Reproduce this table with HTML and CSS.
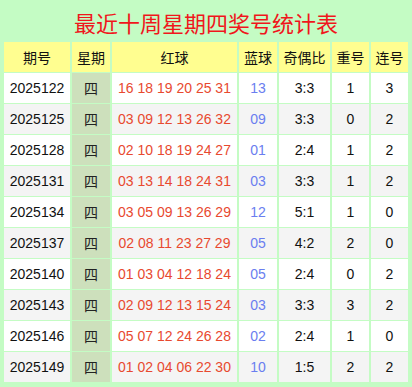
FILE: index.html
```html
<!DOCTYPE html>
<html lang="zh">
<head>
<meta charset="utf-8">
<link rel="stylesheet" href="styles.css">
</head>
<body>
<div class="panel">
  <div class="title">最近十周星期四奖号统计表</div>
  <table class="stats">
    <colgroup>
      <col class="c1"><col class="c2"><col class="c3"><col class="c4"><col class="c5"><col class="c6"><col class="c7">
    </colgroup>
    <thead>
      <tr><th>期号</th><th>星期</th><th>红球</th><th>蓝球</th><th>奇偶比</th><th>重号</th><th>连号</th></tr>
    </thead>
    <tbody>
      <tr><td>2025122</td><td class="wk">四</td><td class="red">16 18 19 20 25 31</td><td class="blue">13</td><td>3:3</td><td>1</td><td>3</td></tr>
      <tr><td>2025125</td><td class="wk">四</td><td class="red">03 09 12 13 26 32</td><td class="blue">09</td><td>3:3</td><td>0</td><td>2</td></tr>
      <tr><td>2025128</td><td class="wk">四</td><td class="red">02 10 18 19 24 27</td><td class="blue">01</td><td>2:4</td><td>1</td><td>2</td></tr>
      <tr><td>2025131</td><td class="wk">四</td><td class="red">03 13 14 18 24 31</td><td class="blue">03</td><td>3:3</td><td>1</td><td>2</td></tr>
      <tr><td>2025134</td><td class="wk">四</td><td class="red">03 05 09 13 26 29</td><td class="blue">12</td><td>5:1</td><td>1</td><td>0</td></tr>
      <tr><td>2025137</td><td class="wk">四</td><td class="red">02 08 11 23 27 29</td><td class="blue">05</td><td>4:2</td><td>2</td><td>0</td></tr>
      <tr><td>2025140</td><td class="wk">四</td><td class="red">01 03 04 12 18 24</td><td class="blue">05</td><td>2:4</td><td>0</td><td>2</td></tr>
      <tr><td>2025143</td><td class="wk">四</td><td class="red">02 09 12 13 15 24</td><td class="blue">03</td><td>3:3</td><td>3</td><td>2</td></tr>
      <tr><td>2025146</td><td class="wk">四</td><td class="red">05 07 12 24 26 28</td><td class="blue">02</td><td>2:4</td><td>1</td><td>0</td></tr>
      <tr><td>2025149</td><td class="wk">四</td><td class="red">01 02 04 06 22 30</td><td class="blue">10</td><td>1:5</td><td>2</td><td>2</td></tr>
    </tbody>
  </table>
</div>
</body>
</html>
```

FILE: styles.css
```css
html, body {
  margin: 0;
  padding: 0;
  background: #c4fcc4;
}
.panel {
  width: 412px;
  height: 387px;
  background: #c4fcc4;
  font-family: "Liberation Sans", "Noto Sans CJK SC", sans-serif;
  overflow: hidden;
}
.title {
  height: 42px;
  line-height: 44px;
  text-align: center;
  color: #f0161c;
  font-size: 22px;
  font-family: "Noto Sans CJK SC", sans-serif;
}
.stats {
  border-collapse: separate;
  border-spacing: 2px 1px;
  table-layout: fixed;
  width: 408px;
  margin: -1px 0 0 2px;
  font-size: 14px;
  color: #111;
}
.c1 { width: 66px; }
.c2 { width: 38px; }
.c3 { width: 125px; }
.c4 { width: 38px; }
.c5 { width: 51px; }
.c6 { width: 37px; }
.c7 { width: 37px; }
.stats th, .stats td {
  padding: 0;
  text-align: center;
  white-space: nowrap;
}
.stats th {
  height: 30px;
  background: #fffe90;
  font-weight: normal;
  font-family: "Noto Sans CJK SC", sans-serif;
  font-size: 14px;
  color: #111;
}
.stats td {
  height: 30px;
  background: #ffffff;
}
.stats tbody tr:nth-child(even) td {
  background: #f4f4f4;
}
.stats td.wk, .stats tbody tr:nth-child(even) td.wk {
  background: #cde0bc;
  font-family: "Noto Sans CJK SC", sans-serif;
  color: #222;
}
.red {
  color: #e8492f;
}
.blue {
  color: #6a7ef0;
}
```
